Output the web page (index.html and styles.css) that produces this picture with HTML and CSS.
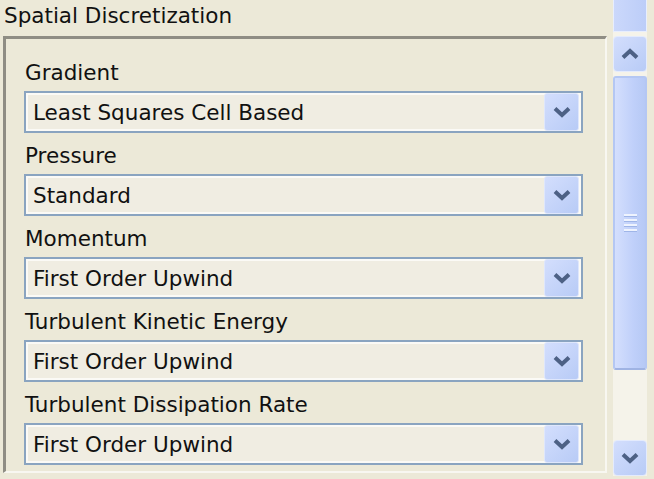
FILE: index.html
```html
<!DOCTYPE html>
<html lang="en">
<head>
  <meta charset="UTF-8" />
  <title>Spatial Discretization</title>
  <link rel="stylesheet" href="styles.css">
</head>
<body>
  <div class="panel">
    <div class="content">
      <div class="title">Spatial Discretization</div>
      <div class="frame">
        <div class="field">
          <div class="label">Gradient</div>
          <div class="combo">
            <span class="value">Least Squares Cell Based</span>
            <span class="drop"><svg width="20" height="12" viewBox="0 0 20 12"><path d="M3 2.5 L10 9 L17 2.5" /></svg></span>
          </div>
        </div>
        <div class="field">
          <div class="label">Pressure</div>
          <div class="combo">
            <span class="value">Standard</span>
            <span class="drop"><svg width="20" height="12" viewBox="0 0 20 12"><path d="M3 2.5 L10 9 L17 2.5" /></svg></span>
          </div>
        </div>
        <div class="field">
          <div class="label">Momentum</div>
          <div class="combo">
            <span class="value">First Order Upwind</span>
            <span class="drop"><svg width="20" height="12" viewBox="0 0 20 12"><path d="M3 2.5 L10 9 L17 2.5" /></svg></span>
          </div>
        </div>
        <div class="field">
          <div class="label">Turbulent Kinetic Energy</div>
          <div class="combo">
            <span class="value">First Order Upwind</span>
            <span class="drop"><svg width="20" height="12" viewBox="0 0 20 12"><path d="M3 2.5 L10 9 L17 2.5" /></svg></span>
          </div>
        </div>
        <div class="field">
          <div class="label">Turbulent Dissipation Rate</div>
          <div class="combo">
            <span class="value">First Order Upwind</span>
            <span class="drop"><svg width="20" height="12" viewBox="0 0 20 12"><path d="M3 2.5 L10 9 L17 2.5" /></svg></span>
          </div>
        </div>
      </div>
    </div>

    <div class="scrollbar">
      <div class="outer-thumb"></div>
      <div class="sb-btn"><svg width="20" height="12" viewBox="0 0 20 12"><path d="M3 9.5 L10 3 L17 9.5" /></svg></div>
      <div class="thumb">
        <div class="grip"><span></span><span></span><span></span><span></span></div>
      </div>
      <div class="track"></div>
      <div class="sb-btn"><svg width="20" height="12" viewBox="0 0 20 12"><path d="M3 2.5 L10 9 L17 2.5" /></svg></div>
    </div>
  </div>
</body>
</html>
```

FILE: styles.css
```css
html, body {
  margin: 0;
  padding: 0;
  background: #ece9d8;
  overflow: hidden;
  height: 479px;
  font-family: 'DejaVu Sans', sans-serif;
  font-size: 21.5px;
  color: #111;
}

.panel {
  display: flex;
  height: 479px;
}

.content {
  width: 604px;
  padding-left: 3px;
}

.title {
  height: 36px;
  line-height: 32px;
  padding-left: 1px;
}

.frame {
  height: 421px;
  border-top: 3px solid #8f8d84;
  border-left: 3px solid #8f8d84;
  border-right: 2px solid #f8f7f1;
  border-bottom: 2px solid #f8f7f1;
  padding: 11px 0 0 18px;
  display: flex;
  flex-direction: column;
}

.field {
  width: 559px;
}

.label {
  height: 41px;
  line-height: 30px;
  display: flex;
  align-items: flex-end;
  padding-left: 1px;
  padding-bottom: 3px;
  box-sizing: border-box;
}

.combo {
  height: 42px;
  box-sizing: border-box;
  border: 2px solid #8aa4c0;
  background: #f0ede2;
  box-shadow: inset 0 0 0 2px #fbfaf6;
  display: flex;
  align-items: center;
  padding: 2px;
}

.value {
  flex: 1;
  padding-left: 5px;
}

.drop {
  width: 35px;
  height: 38px;
  box-sizing: border-box;
  border: 1px solid #dfe7fc;
  border-radius: 3px;
  background: linear-gradient(135deg, #d3defd, #b8cbf6);
  display: flex;
  align-items: center;
  justify-content: center;
}

.drop path, .sb-btn path {
  fill: none;
  stroke: #4d6185;
  stroke-width: 4;
}

.scrollbar {
  width: 34px;
  height: 476px;
  margin-left: 6px;
  display: flex;
  flex-direction: column;
  background: #f5f3ea;
}

.outer-thumb {
  height: 32px;
  background: linear-gradient(90deg, #cbd8fb, #bccdf8);
  border: 1px solid #e8eefd;
  border-top: none;
  box-sizing: border-box;
}

.sb-btn {
  height: 36px;
  margin-top: 4px;
  box-sizing: border-box;
  border: 1px solid #e4ebfd;
  border-radius: 4px;
  background: linear-gradient(135deg, #d3defd, #b8cbf6);
  display: flex;
  align-items: center;
  justify-content: center;
}

.thumb {
  height: 294px;
  margin-top: 4px;
  box-sizing: border-box;
  border: 2px solid #b4c7f3;
  border-bottom-color: #9fb3e3;
  border-radius: 3px;
  background: linear-gradient(90deg, #d4dffd, #c0d0fa 60%, #b6c9f5);
  display: flex;
  align-items: center;
  justify-content: center;
}

.grip {
  display: flex;
  flex-direction: column;
  gap: 2px;
}

.grip span {
  width: 13px;
  height: 2px;
  background: #eef3fe;
  border-bottom: 1px solid #9fb5e8;
}

.track {
  flex: 1;
}
```
